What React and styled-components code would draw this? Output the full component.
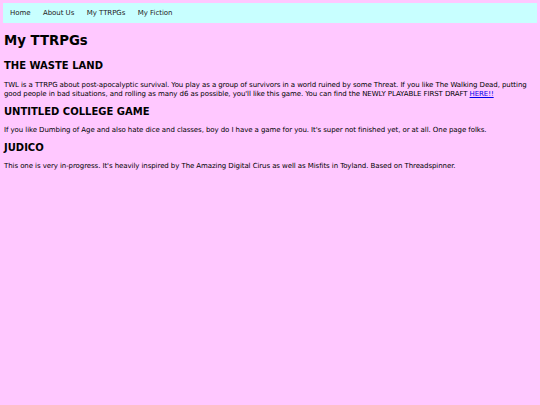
import React from "react";
import styled, { createGlobalStyle } from "styled-components";

const Global = createGlobalStyle`
  html, body { margin: 0; padding: 0; }
  body {
    background: #ffc8ff;
    margin: 3px;
    font-family: "DejaVu Sans", Verdana, sans-serif;
    font-size: 7px;
    color: #000;
  }
`;

const Nav = styled.nav`
  background: #c8ffff;
  height: 20px;
  display: flex;
  align-items: center;
  padding-left: 7px;
  gap: 12.5px;
`;

const NavLink = styled.a`
  color: #222;
  text-decoration: none;
  font-size: 7px;
  letter-spacing: -0.05px;
`;

const Main = styled.main`
  padding: 0 0 0 1px;
`;

const Title = styled.h1`
  font-size: 13.3px;
  margin: 10px 0 12px;
`;

const Heading = styled.h2`
  font-size: 10px;
  margin: 6px 0 9.5px;
`;

const Para = styled.p`
  margin: 6px 0;
  line-height: 9.5px;
  letter-spacing: -0.08px;
`;

const Link = styled.a`
  color: #0000ee;
`;

export default function App() {
  return (
    <>
      <Global />
      <Nav>
        <NavLink href="#">Home</NavLink>
        <NavLink href="#">About Us</NavLink>
        <NavLink href="#">My TTRPGs</NavLink>
        <NavLink href="#">My Fiction</NavLink>
      </Nav>
      <Main>
        <Title>My TTRPGs</Title>
        <Heading>THE WASTE LAND</Heading>
        <Para>
          TWL is a TTRPG about post-apocalyptic survival. You play as a group of survivors in a world ruined by some Threat. If you like The Walking Dead, putting good people in bad situations, and rolling as many d6 as possible, you'll like this game. You can find the NEWLY PLAYABLE FIRST DRAFT <Link href="#">HERE!!</Link>
        </Para>
        <Heading>UNTITLED COLLEGE GAME</Heading>
        <Para>
          If you like Dumbing of Age and also hate dice and classes, boy do I have a game for you. It's super not finished yet, or at all. One page folks.
        </Para>
        <Heading>JUDICO</Heading>
        <Para>
          This one is very in-progress. It's heavily inspired by The Amazing Digital Cirus as well as Misfits in Toyland. Based on Threadspinner.
        </Para>
      </Main>
    </>
  );
}
